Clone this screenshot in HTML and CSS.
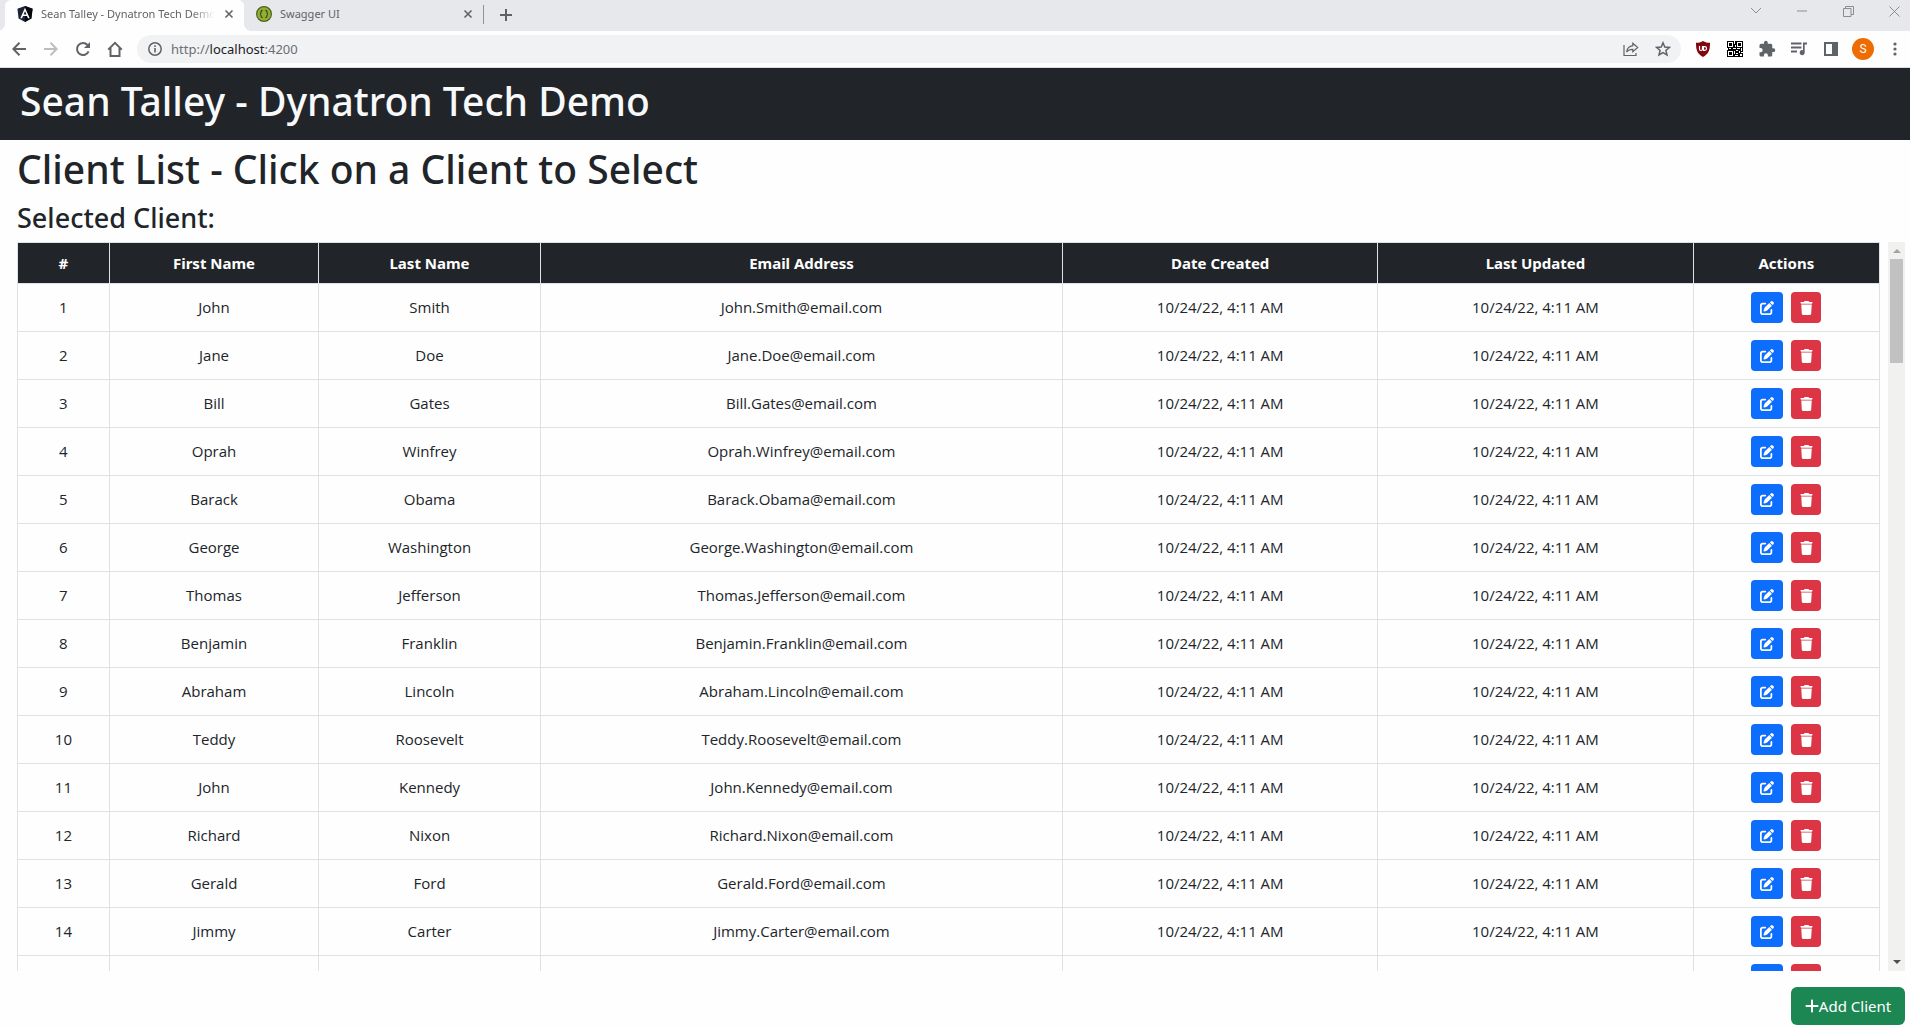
FILE: index.html
```
<!DOCTYPE html>
<html lang="en">
<head>
<meta charset="utf-8">
<title>Sean Talley - Dynatron Tech Demo</title>
<link rel="stylesheet" href="styles.css">
</head>
<body>
<svg class="sprite" aria-hidden="true">
  <symbol id="edit" viewBox="0 0 512 512"><path d="M471.6 21.7c-21.9-21.9-57.3-21.9-79.2 0L362.3 51.7l97.9 97.9 30.1-30.1c21.9-21.9 21.9-57.3 0-79.2L471.6 21.7zm-299.2 220c-6.1 6.1-10.8 13.6-13.5 21.9l-29.6 88.8c-2.9 8.6-.6 18.1 5.8 24.6s15.9 8.7 24.6 5.8l88.8-29.6c8.2-2.7 15.7-7.4 21.9-13.5L437.7 172.3 339.7 74.3 172.4 241.7zM96 64C43 64 0 107 0 160V416c0 53 43 96 96 96H352c53 0 96-43 96-96V320c0-17.7-14.3-32-32-32s-32 14.3-32 32v96c0 17.7-14.3 32-32 32H96c-17.7 0-32-14.3-32-32V160c0-17.7 14.3-32 32-32h96c17.7 0 32-14.3 32-32s-14.3-32-32-32H96z"/></symbol>
  <symbol id="trash" viewBox="0 0 448 512"><path d="M135.2 17.7L128 32H32C14.3 32 0 46.3 0 64S14.3 96 32 96H416c17.7 0 32-14.3 32-32s-14.3-32-32-32H320l-7.2-14.3C307.4 6.8 296.3 0 284.2 0H163.8c-12.1 0-23.2 6.8-28.6 17.7zM416 128H32L53.2 467c1.6 25.3 22.6 45 47.9 45H346.9c25.3 0 46.3-19.7 47.9-45L416 128z"/></symbol>
  <symbol id="cross" viewBox="0 0 10 10"><path d="M1.5 1.5l7 7M8.5 1.5l-7 7" fill="none" stroke="currentColor" stroke-width="1.6"/></symbol>
</svg>

<div class="tabstrip">
  <div class="tab tab-active">
    <svg class="favicon" viewBox="0 0 16 16"><path d="M8 0l7.6 2.7-1.2 9.9L8 16l-6.4-3.4L.4 2.7z" fill="#1c2433"/><path d="M8 0l7.6 2.7-1.2 9.9L8 16z" fill="#05070c"/><path d="M8 1.8L3.3 12.3h1.8l.9-2.4h4l.9 2.4h1.8zm0 3.4l1.4 3.2H6.6z" fill="#fff"/></svg>
    <span class="tab-title tab-fade">Sean Talley - Dynatron Tech Demo</span>
    <button class="tab-close" aria-label="Close tab"><svg width="10" height="10"><use href="#cross"/></svg></button>
  </div>
  <div class="tab">
    <svg class="favicon" viewBox="0 0 16 16"><circle cx="8" cy="8" r="7.4" fill="#9aad2b" stroke="#47652f" stroke-width="1.2"/><path d="M6.6 4.4c-1.6 0-1.6.6-1.6 1.8S4.700 8 3.800 8c.9 0 1.200.6 1.200 1.800s0 1.800 1.600 1.800M9.400 4.400c1.600 0 1.600.6 1.600 1.800s.3 1.800 1.200 1.800c-.9 0-1.200.6-1.200 1.800s0 1.800-1.600 1.800" fill="none" stroke="#1f4a2c" stroke-width="1.200"/><path d="M6.500 8h3" stroke="#7fae8c" stroke-dasharray="1 1"/></svg>
    <span class="tab-title">Swagger UI</span>
    <button class="tab-close" aria-label="Close tab"><svg width="10" height="10"><use href="#cross"/></svg></button>
  </div>
  <button class="new-tab" aria-label="New tab"><svg width="12" height="12" viewBox="0 0 12 12"><path d="M6 0v12M0 6h12" stroke="currentColor" stroke-width="2"/></svg></button>
  <div class="window-controls">
    <button aria-label="Search tabs"><svg width="12" height="8" viewBox="0 0 12 8"><path d="M1 1l5 5 5-5"/></svg></button>
    <button aria-label="Minimize"><svg width="10" height="2" viewBox="0 0 10 2"><path d="M0 1h10"/></svg></button>
    <button aria-label="Restore"><svg width="11" height="11" viewBox="0 0 11 11"><path d="M.5 2.500h7.500v8H.5zM2.500 2.500v-2h8v8H8"/></svg></button>
    <button aria-label="Close window"><svg width="11" height="11" viewBox="0 0 11 11"><path d="M.5.5l10 10M10.500.5l-10 10"/></svg></button>
  </div>
</div>

<div class="toolbar">
  <button class="tool" aria-label="Back"><svg width="14" height="14" viewBox="0 0 14 14"><path d="M14 7H1.500M7.500.8L1.300 7l6.200 6.200" class="line"/></svg></button>
  <button class="tool tool-off" aria-label="Forward"><svg width="14" height="14" viewBox="0 0 14 14"><path d="M0 7h12.500M6.500.8L12.700 7l-6.200 6.200" class="line"/></svg></button>
  <button class="tool" aria-label="Reload"><svg width="16" height="16" viewBox="0 0 16 16"><path d="M13.600 10.300A6 6 0 1 1 12.500 4" class="line"/><path d="M15 1v6H9z"/></svg></button>
  <button class="tool" aria-label="Home"><svg width="16" height="16" viewBox="0 0 16 16"><path d="M1.200 8.600L8 1.800l6.800 6.800M3.500 7v8h9V7" class="line"/></svg></button>
  <div class="omnibox">
    <button class="tool" aria-label="Site information"><svg width="14" height="14" viewBox="0 0 14 14"><circle cx="7" cy="7" r="6.200" fill="none" stroke="currentColor" stroke-width="1.500"/><path d="M6.200 6h1.600v4.600H6.200zM6.200 3.300h1.600v1.600H6.200z"/></svg></button>
    <a class="url" href="http://localhost:4200">http://<span class="host">localhost</span>:4200</a>
    <button class="tool" aria-label="Share"><svg width="16" height="16" viewBox="0 0 16 16"><path d="M1 4v10.500h12V12M9.800 2.200l4.900 4.300-4.900 4.200V8.300C7 8.300 5 9 3.600 11c.4-3.300 2.400-5.700 6.200-6.300z" fill="none" stroke="currentColor" stroke-width="1.200"/></svg></button>
    <button class="tool" aria-label="Bookmark"><svg width="16" height="16" viewBox="0 0 16 16"><path d="M8 1.800l1.800 4.200 4.600.4-3.500 3 1.100 4.500L8 11.500l-4 2.400 1.100-4.500-3.500-3L6.200 6z" fill="none" stroke="currentColor" stroke-width="1.500"/></svg></button>
  </div>
  <button class="tool" aria-label="Ad blocker"><svg width="16" height="16" viewBox="0 0 16 16"><path d="M8 0c2 1.300 4.300 1.800 7 1.800 0 7-1 11-7 14.200C2 12.800 1 8.800 1 1.800 3.700 1.800 6 1.300 8 0z" fill="#800610"/><path d="M4.500 5v3a1.500 1.500 0 0 0 3 0V5" fill="none" stroke="#fff" stroke-width="1.200"/><path d="M8.500 9.300V5.600h1.200a1.850 1.850 0 0 1 0 3.700z" fill="none" stroke="#fff" stroke-width="1.200"/></svg></button>
  <button class="tool" aria-label="QR code"><svg width="16" height="16" viewBox="0 0 16 16" shape-rendering="crispEdges"><path fill="#000" d="M0 0h16v16H0z"/><path fill="#fff" d="M1 1h5v5H1zM10 1h5v5h-5zM1 10h5v5H1zM7 0h1v3H7zM8 4h1v2H8zM6 7h3v1H6zM0 7h1v2H0zM2 7h2v1H2zM10 7h3v1h-3zM14 7h1v3h-1zM7 10h1v3H7zM9 9h2v1H9zM12 10h1v2h-1zM9 12h2v1H9zM13 13h2v2h-2zM8 14h3v1H8zM14 11h2v1h-2z"/><path fill="#000" d="M2 2h3v3H2zM11 2h3v3h-3zM2 11h3v3H2z"/></svg></button>
  <button class="tool" aria-label="Extensions"><svg width="18" height="18" viewBox="0 0 24 24"><path d="M20.500 11H19V7a2 2 0 0 0-2-2h-4V3.500a2.500 2.500 0 0 0-5 0V5H4a2 2 0 0 0-2 2v3.800h1.500a2.700 2.700 0 0 1 0 5.400H2V20a2 2 0 0 0 2 2h3.800v-1.500a2.700 2.700 0 0 1 5.400 0V22H17a2 2 0 0 0 2-2v-4h1.500a2.500 2.500 0 0 0 0-5z"/></svg></button>
  <button class="tool" aria-label="Media"><svg width="18" height="16" viewBox="0 0 18 16"><path d="M1 2.500h10.500M1 6.500h10.500M1 10.500h6" fill="none" stroke="currentColor" stroke-width="1.800"/><path d="M13 1.500h4v2h-2.300v8.200a2.500 2.500 0 1 1-1.700-2.400z"/></svg></button>
  <button class="tool" aria-label="Side panel"><svg width="14" height="14" viewBox="0 0 14 14"><path fill-rule="evenodd" d="M0 0h14v14H0zM2 2v10h6V2z"/></svg></button>
  <button class="tool" aria-label="Profile"><span class="avatar">S</span></button>
  <button class="tool menu" aria-label="Menu"><svg width="4" height="14" viewBox="0 0 4 14"><circle cx="2" cy="2" r="1.600"/><circle cx="2" cy="7" r="1.600"/><circle cx="2" cy="12" r="1.600"/></svg></button>
</div>

<header class="site-header"><h1>Sean Talley - Dynatron Tech Demo</h1></header>

<main class="page">
  <h1>Client List - Click on a Client to Select</h1>
  <h3>Selected Client:</h3>
  <div class="list">
    <div class="viewport">
      <table class="clients">
        <colgroup><col class="c-id"><col class="c-first"><col class="c-last"><col class="c-email"><col class="c-date"><col class="c-date"><col class="c-act"></colgroup>
        <thead><tr><th>#</th><th>First Name</th><th>Last Name</th><th>Email Address</th><th>Date Created</th><th>Last Updated</th><th>Actions</th></tr></thead>
        <tbody id="rows"></tbody>
      </table>
    </div>
    <div class="scrollbar" aria-hidden="true">
      <svg class="arrow arrow-up" width="8" height="4" viewBox="0 0 8 4"><path d="M0 4l4-4 4 4z"/></svg>
      <div class="track"><div class="thumb"></div></div>
      <svg class="arrow" width="8" height="4" viewBox="0 0 8 4"><path d="M0 0l4 4 4-4z"/></svg>
    </div>
  </div>
  <div class="actions-bar">
    <button class="add"><svg width="14" height="16" viewBox="0 0 448 512"><path d="M256 80c0-17.700-14.300-32-32-32s-32 14.300-32 32V224H48c-17.700 0-32 14.300-32 32s14.300 32 32 32H192V432c0 17.700 14.300 32 32 32s32-14.300 32-32V288H400c17.700 0 32-14.300 32-32s-14.300-32-32-32H256V80z"/></svg>Add Client</button>
  </div>
</main>
<script src="clients.js"></script>
</body>
</html>
```
FILE: clients.js
```
const clients = [
  ['John', 'Smith'], ['Jane', 'Doe'], ['Bill', 'Gates'], ['Oprah', 'Winfrey'],
  ['Barack', 'Obama'], ['George', 'Washington'], ['Thomas', 'Jefferson'],
  ['Benjamin', 'Franklin'], ['Abraham', 'Lincoln'], ['Teddy', 'Roosevelt'],
  ['John', 'Kennedy'], ['Richard', 'Nixon'], ['Gerald', 'Ford'], ['Jimmy', 'Carter'],
];
const stamp = '10/24/22, 4:11 AM';
const actions = `<div class="row-actions">
  <button class="btn-edit" aria-label="Edit"><svg width="14" height="14"><use href="#edit"/></svg></button>
  <button class="btn-delete" aria-label="Delete"><svg width="13" height="14"><use href="#trash"/></svg></button>
</div>`;
const row = cells => `<tr>${cells.map(c => `<td>${c}</td>`).join('')}</tr>`;

document.getElementById('rows').innerHTML = clients
  .map(([first, last], i) => row([i + 1, first, last, `${first}.${last}@email.com`, stamp, stamp, actions]))
  .join('') + row(['', '', '', '', '', '', actions]);
```
FILE: styles.css
```
* { box-sizing: border-box; }
body {
  margin: 0;
  height: 100vh;
  display: flex;
  flex-direction: column;
  background: #fefefe;
  color: #212529;
  font: 15px/24px "Noto Sans", "Open Sans", sans-serif;
}
button { font: inherit; color: inherit; background: none; border: 0; padding: 0; display: flex; align-items: center; justify-content: center; }
svg { display: block; fill: currentColor; }
h1, h3 { margin: 0; font-weight: 500; }
h1 { font-size: 39px; line-height: 48px; }
h3 { font-size: 27px; line-height: 33px; }
.sprite { position: absolute; width: 0; height: 0; }

.tabstrip { display: flex; height: 31px; flex: none; background: #e7e8ec; padding-left: 5px; color: #5f6368; }
.tab { position: relative; display: flex; align-items: center; width: 239px; height: 31px; padding: 0 7px 3px 12px; font-size: 11px; line-height: 16px; }
.tab-active { background: #fefefe; border-radius: 6px 6px 0 0; }
.tab-active::before, .tab-active::after { content: ""; position: absolute; bottom: 0; width: 8px; height: 8px; }
.tab-active::before { right: 100%; background: radial-gradient(circle at 0 0, transparent 8px, #fefefe 8px); }
.tab-active::after { left: 100%; background: radial-gradient(circle at 100% 0, transparent 8px, #fefefe 8px); }
.favicon { width: 16px; height: 16px; flex: none; }
.tab-title { flex: 1; margin: 0 6px 0 8px; white-space: nowrap; overflow: hidden; }
.tab-fade { -webkit-mask-image: linear-gradient(to left, transparent, #000 24px); mask-image: linear-gradient(to left, transparent, #000 24px); }
.tab-close { width: 16px; height: 16px; }
.new-tab { width: 44px; height: 19px; margin-top: 5px; border-left: 1px solid #8f9195; }
.window-controls { display: flex; gap: 14px; margin-left: auto; }
.window-controls button { width: 32px; height: 22px; }
.window-controls svg { fill: none; stroke: #8b8d91; }

.toolbar { display: flex; align-items: center; flex: none; height: 37px; padding-left: 3px; border-bottom: 1px solid #dadce0; color: #5f6368; }
.tool { width: 32px; height: 27px; flex: none; }
.tool-off { color: #bcbdc0; }
.line { fill: none; stroke: currentColor; stroke-width: 2; }
.omnibox { flex: 1; display: flex; align-items: center; height: 28px; margin: 0 6px; padding: 0 2px; border-radius: 14px; background: #f1f2f4; }
.url { flex: 1; font-size: 13px; line-height: 20px; color: #6b6f74; text-decoration: none; }
.host { color: #202124; }
.avatar { width: 22px; height: 22px; border-radius: 50%; background: #ee6c02; color: #fff; font: 12px/22px Roboto, sans-serif; }
.menu { width: 31px; }

.site-header { flex: none; background: #212529; color: #f8f9fa; padding: 9px 20px 15px; }
.page { flex: 1; min-height: 0; display: flex; flex-direction: column; padding: 5px 5px 3px 17px; }
.page h3 { margin: 8px 0; }
.list { flex: 1; min-height: 0; display: flex; gap: 8px; }
.viewport { flex: 1; overflow: hidden; }
.clients { width: 100%; table-layout: fixed; border-collapse: collapse; text-align: center; }
.clients th, .clients td { border: 1px solid #dee2e6; padding: 8px; }
.clients td { height: 48px; padding: 0 8px 2px; font-family: "Open Sans", "Noto Sans", sans-serif; }
.clients td:last-child { padding-bottom: 0; }
.clients th { background: #212529; color: #fff; font-weight: 700; }
.c-id { width: 4.93%; }
.c-first { width: 11.25%; }
.c-last { width: 11.9%; }
.c-email { width: 28.05%; }
.c-date { width: 16.93%; }
.row-actions { display: flex; justify-content: center; gap: 8px; }
.btn-edit, .btn-delete { height: 31px; border-radius: 4px; color: #fff; }
.btn-edit { width: 32px; background: #0d6efd; }
.btn-delete { width: 30px; background: #dc3545; }

.scrollbar { width: 17px; display: flex; flex-direction: column; align-items: center; padding: 7px 2px; background: #f1f1f0; }
.arrow { flex: none; color: #505050; }
.arrow-up { color: #a3a3a3; }
.track { flex: 1; width: 100%; padding: 6px 0; }
.thumb { height: 15%; background: #c1c1c1; }
.actions-bar { display: flex; justify-content: flex-end; margin-top: 16px; }
.add { height: 38px; min-width: 114px; padding: 0 12px; border-radius: 6px; background: #1d8754; color: #fff; }
```
